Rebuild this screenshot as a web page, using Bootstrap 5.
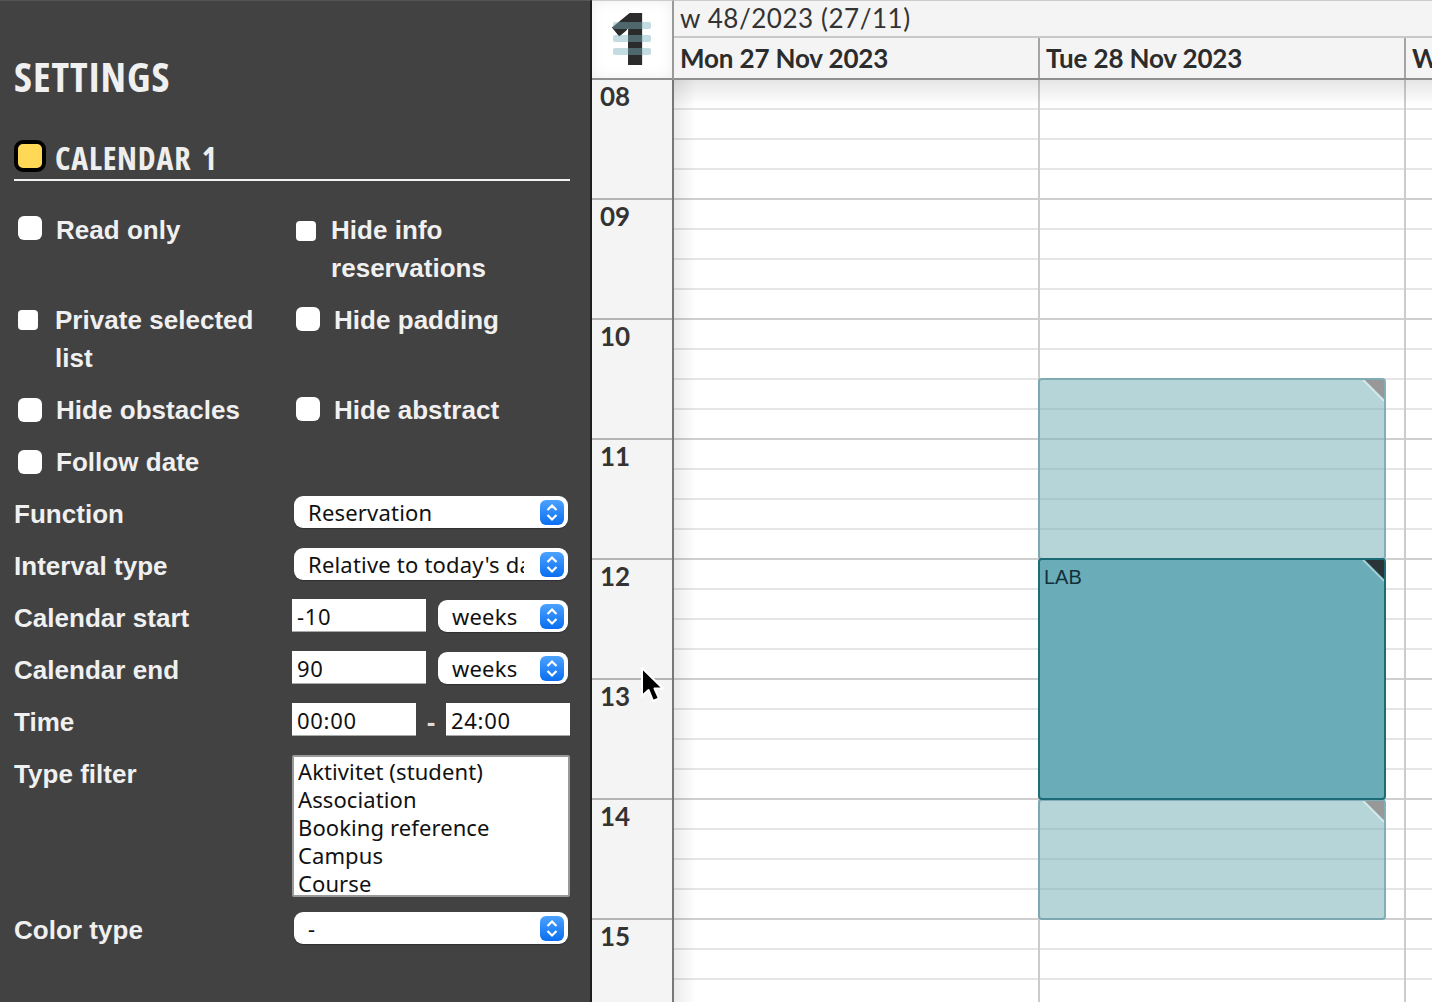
<!DOCTYPE html>
<html lang="en">
<head>
<meta charset="utf-8">
<title>Settings</title>
<link href="https://cdn.jsdelivr.net/npm/bootstrap@5.3.0/dist/css/bootstrap.min.css" rel="stylesheet">
<style>
html,body{height:1002px;overflow:hidden}
body{background:#fff;font-family:"Lato",sans-serif}
.panel{width:592px;height:1002px;flex:none;background:#424242;border-right:2px solid #1d1d1d;border-top:1px solid #555;padding:0 20px 0 14px;color:#f0f0f0;overflow:hidden;font-family:"Liberation Sans",sans-serif}
.ptitle{font-family:"Open Sans","Liberation Sans",sans-serif;font-stretch:75%;font-weight:700;font-size:41px;line-height:48px;letter-spacing:1px;margin:51px 0 0;color:#f0f0f0}
.calhead{display:flex;align-items:center;gap:9px;border-bottom:2px solid #f2f2f2;height:42px;margin-top:39px;padding-bottom:7px;margin-bottom:30px}
.swatch{width:32px;height:32px;background:#ffd855;border:4px solid #000;border-radius:9px;flex:none}
.calname{font-family:"Open Sans","Liberation Sans",sans-serif;font-stretch:75%;font-weight:700;font-size:32px;line-height:36px;letter-spacing:.8px;word-spacing:4px;margin:4px 0 0;color:#eee}
.frow{display:flex;margin-bottom:14px;min-height:38px}
.fcell{width:278px;flex:none;display:flex;align-items:flex-start;font-weight:700;font-size:26px;line-height:38px;letter-spacing:.03px}
.ctl{flex:1;display:flex;align-items:flex-start;gap:12px;height:38px}
.form-check-input.box{width:24px;height:24px;border:0;border-radius:6px;background-color:#fff;flex:none}
.form-check-input.mini{width:20px;height:20px;border-radius:4px}
.form-check-input.c1{margin:5px 14px 0 4px}
.form-check-input.c1b{margin:7px 14px 0 4px}
.form-check-input.c1s{margin:10px 15px 0 4px}
.form-check-input.c2{margin:9px 17px 0 4px}
.form-check-input.c3{margin:6px 14px 0 4px}
.sel{appearance:none;-webkit-appearance:none;display:block;height:32px;width:274px;margin:1px 0 0 2px;border:0;border-radius:9px;padding:0 44px 0 14px;font-family:"Noto Sans",sans-serif;font-size:22px;line-height:32px;color:#111;letter-spacing:.2px;box-shadow:0 1px 1px rgba(0,0,0,.3);
background:#fff url("data:image/svg+xml,%3Csvg xmlns='http://www.w3.org/2000/svg' width='24' height='25'%3E%3Cdefs%3E%3ClinearGradient id='g' x1='0' y1='0' x2='0' y2='1'%3E%3Cstop offset='0' stop-color='%234ba2ff'/%3E%3Cstop offset='1' stop-color='%230a6ef0'/%3E%3C/linearGradient%3E%3C/defs%3E%3Crect width='24' height='25' rx='6' fill='url(%23g)'/%3E%3Cpath d='M7.5 10 12 5.5 16.5 10M7.5 15 12 19.5 16.5 15' fill='none' stroke='%23fff' stroke-width='2.2'/%3E%3C/svg%3E") no-repeat right 4px center}
.sel:focus{outline:0}
.sel.unit{width:130px;margin-left:0}
.txt{height:33px;border:0;border-bottom:1px solid #aaa;border-radius:0;padding:3px 4px 0 5px;font-family:"Noto Sans",sans-serif;font-size:22px;color:#111;background:#fff;display:block;letter-spacing:.7px}
.txt.w1{width:134px}
.txt.w2{width:124px}
.dash{width:30px;text-align:center;font-weight:700;font-size:26px;line-height:38px;flex:none;color:#ddd}
.timectl{gap:0}
.multi{display:block;width:278px;height:142px;border:2px solid #999;background:#fff;overflow:hidden;padding:0 0 0 4px;font-family:"Noto Sans",sans-serif;font-size:22px;color:#111;letter-spacing:.1px}
.multi option{padding:0;height:28px;line-height:28px;min-height:28px}
.multi option:first-child{margin-top:-1px}
.multi:focus{outline:0}
.typeh{min-height:142px}
.colorrow{margin-top:1px}

.cal{flex:1;min-width:0;height:1002px;overflow:hidden;position:relative;color:#2e2e2e}
.chead{display:flex;height:80px;position:relative}
.corner{width:82px;flex:none;background:#fff;border-right:2px solid #999;border-bottom:2px solid #8f8f8f;border-top:1px solid #ccc;position:relative;box-shadow:inset 0 0 14px rgba(0,0,0,.07)}
.cnum{position:absolute;left:0;right:4px;top:0;text-align:center;font-family:"Open Sans",sans-serif;font-weight:800;font-size:72px;line-height:72px;color:#2b2b2b}
.cbars{position:absolute;left:21px;top:21px;width:38px;display:flex;flex-direction:column;gap:6px}
.cbars i{display:block;height:7px;border-radius:2px;background:rgba(120,178,188,.45)}
.hdays{flex:1;min-width:0;background:#f4f4f4;display:flex;flex-direction:column;border-top:1px solid #ccc;border-bottom:2px solid #8f8f8f}
.weekline{height:37px;flex:none;padding-left:6px;font-size:26px;line-height:35px;border-bottom:2px solid #c8c8c8;letter-spacing:.55px;color:#333}
.dayline{display:flex;flex:1;min-height:0}
.dayh{width:366px;flex:none;border-right:2px solid #a5a5a5;padding-left:6px;font-weight:700;font-size:26px;line-height:41px;white-space:nowrap;overflow:hidden;letter-spacing:-.15px;color:#2c2c2c}
.cbody{display:flex;height:922px;position:relative}
.gutter{width:82px;flex:none;background:#f4f4f4;border-right:2px solid #777}
.hourlab{height:120px;border-bottom:2px solid #b4b4b4;padding-left:8px;font-weight:700;font-size:26px;line-height:33px;color:#333}
.days{display:flex;flex:1;min-width:0;position:relative}
.daycol{width:366px;flex:none;height:100%;position:relative;border-right:2px solid #ccc;
background:repeating-linear-gradient(to bottom,#fff 0,#fff 28px,#e5e5e5 28px,#e5e5e5 30px,#fff 30px,#fff 58px,#e5e5e5 58px,#e5e5e5 60px,#fff 60px,#fff 88px,#e5e5e5 88px,#e5e5e5 90px,#fff 90px,#fff 118px,#cfcfcf 118px,#cfcfcf 120px)}
.shadeTop{position:absolute;left:0;right:0;top:0;height:26px;background:linear-gradient(to bottom,rgba(0,0,0,.1),rgba(0,0,0,0))}
.shadeLeft{position:absolute;left:0;top:0;bottom:0;width:22px;background:linear-gradient(to right,rgba(0,0,0,.08),rgba(0,0,0,0))}
.evt{position:absolute;left:-2px;width:348px;border-radius:4px;color:#12303a;font-family:"Liberation Sans",sans-serif;font-size:20px;line-height:24px;padding:5px 4px}
.evt.pale{background:rgba(120,178,186,.55);border:2px solid rgba(110,160,170,.7)}
.evt.solid{background:#6aadb8;border:2px solid #1b6c76;z-index:1}
.tri{position:absolute;right:0;top:0}
.arrow{position:absolute;left:48px;top:666px;z-index:5}
</style>
</head>
<body class="d-flex m-0">
<aside class="panel">
  <h1 class="ptitle">SETTINGS</h1>
  <div class="calhead"><span class="swatch"></span><h2 class="calname">CALENDAR 1</h2></div>

  <div class="frow">
    <label class="fcell"><input class="form-check-input box c1" type="checkbox">Read only</label>
    <label class="fcell"><input class="form-check-input box mini c1s" type="checkbox"><span>Hide info<br>reservations</span></label>
  </div>
  <div class="frow">
    <label class="fcell"><input class="form-check-input box mini c2" type="checkbox"><span>Private selected<br>list</span></label>
    <label class="fcell"><input class="form-check-input box c3" type="checkbox">Hide padding</label>
  </div>
  <div class="frow">
    <label class="fcell"><input class="form-check-input box c1b" type="checkbox">Hide obstacles</label>
    <label class="fcell"><input class="form-check-input box c3" type="checkbox">Hide abstract</label>
  </div>
  <div class="frow">
    <label class="fcell"><input class="form-check-input box c1b" type="checkbox">Follow date</label>
  </div>
  <div class="frow">
    <div class="fcell">Function</div>
    <div class="ctl"><select class="sel"><option>Reservation</option></select></div>
  </div>
  <div class="frow">
    <div class="fcell">Interval type</div>
    <div class="ctl"><select class="sel"><option>Relative to today's date</option></select></div>
  </div>
  <div class="frow">
    <div class="fcell">Calendar start</div>
    <div class="ctl"><input class="txt w1" value="-10"><select class="sel unit"><option>weeks</option></select></div>
  </div>
  <div class="frow">
    <div class="fcell">Calendar end</div>
    <div class="ctl"><input class="txt w1" value="90"><select class="sel unit"><option>weeks</option></select></div>
  </div>
  <div class="frow">
    <div class="fcell">Time</div>
    <div class="ctl timectl"><input class="txt w2" value="00:00"><span class="dash">-</span><input class="txt w2" value="24:00"></div>
  </div>
  <div class="frow typeh">
    <div class="fcell">Type filter</div>
    <select class="multi" multiple size="5">
      <option>Aktivitet (student)</option>
      <option>Association</option>
      <option>Booking reference</option>
      <option>Campus</option>
      <option>Course</option>
    </select>
  </div>
  <div class="frow colorrow">
    <div class="fcell">Color type</div>
    <div class="ctl"><select class="sel"><option>-</option></select></div>
  </div>
</aside>

<main class="cal">
  <div class="chead">
    <div class="corner"><span class="cnum">1</span><div class="cbars"><i></i><i></i><i></i></div></div>
    <div class="hdays">
      <div class="weekline">w 48/2023 (27/11)</div>
      <div class="dayline">
        <div class="dayh">Mon 27 Nov 2023</div>
        <div class="dayh">Tue 28 Nov 2023</div>
        <div class="dayh">Wed 29 Nov 2023</div>
      </div>
    </div>
  </div>
  <div class="cbody">
    <div class="gutter">
      <div class="hourlab">08</div>
      <div class="hourlab">09</div>
      <div class="hourlab">10</div>
      <div class="hourlab">11</div>
      <div class="hourlab">12</div>
      <div class="hourlab">13</div>
      <div class="hourlab">14</div>
      <div class="hourlab">15</div>
    </div>
    <div class="days">
      <div class="daycol"></div>
      <div class="daycol">
        <div class="evt pale" style="top:298px;height:182px">
          <svg class="tri" width="22" height="22" viewBox="0 0 22 22"><polygon points="3,0 22,0 22,19" fill="#989898"/><line x1="1" y1="0" x2="22" y2="21" stroke="#e4f2f4" stroke-width="1.500" opacity=".8"/></svg>
        </div>
        <div class="evt pale" style="top:719px;height:121px">
          <svg class="tri" width="22" height="22" viewBox="0 0 22 22"><polygon points="3,0 22,0 22,19" fill="#989898"/><line x1="1" y1="0" x2="22" y2="21" stroke="#e4f2f4" stroke-width="1.500" opacity=".8"/></svg>
        </div>
        <div class="evt solid" style="top:478px;height:242px">LAB
          <svg class="tri" width="22" height="22" viewBox="0 0 22 22"><polygon points="3,0 22,0 22,19" fill="#2b3538"/><line x1="1" y1="0" x2="22" y2="21" stroke="#bfe0e4" stroke-width="1.500" opacity=".8"/></svg>
        </div>
      </div>
      <div class="daycol"></div>
      <div class="shadeTop"></div>
      <div class="shadeLeft"></div>
    </div>
  </div>
  <svg class="arrow" width="26" height="38" viewBox="0 0 26 38"><path d="M2 2V30L8.500 24L13 35L19 32.500L14.500 22.500H23Z" fill="#000" stroke="#fff" stroke-width="2" stroke-linejoin="round"/></svg>
</main>
<script src="https://cdn.jsdelivr.net/npm/bootstrap@5.3.0/dist/js/bootstrap.bundle.min.js"></script>
</body>
</html>
